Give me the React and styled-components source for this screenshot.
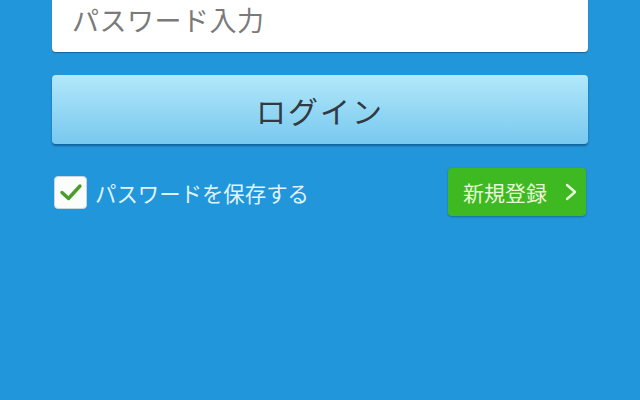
import styled, { createGlobalStyle } from "styled-components";

const GlobalStyle = createGlobalStyle`
  html, body {
    margin: 0;
    padding: 0;
    background: #2296da;
  }
  body {
    font-family: "Noto Sans CJK JP", "Noto Sans", sans-serif;
  }
`;

const Screen = styled.div`
  width: 640px;
  height: 400px;
  overflow: hidden;
  background: #2296da;
  box-sizing: border-box;
  padding: 0 52px;
`;

const Form = styled.div`
  display: flex;
  flex-direction: column;
`;

// the field's top edge is scrolled off the screen in the picture
const Field = styled.div`
  height: 52px;
  background: #fff;
  border-radius: 0 0 4px 4px;
  box-shadow: 0 1px 1px rgba(0, 40, 90, 0.45);
  display: flex;
  align-items: flex-start;
  padding: 6px 0 0 20px;
  box-sizing: border-box;
  color: #7a7a7a;
  font-size: 27px;
  line-height: 1;
  letter-spacing: 0.5px;
`;

const LoginButton = styled.div`
  margin-top: 23px;
  height: 69px;
  border-radius: 4px;
  background: linear-gradient(#b2e8fa, #78c8ef);
  box-shadow: 0 2px 2px rgba(0, 50, 100, 0.5);
  display: flex;
  align-items: center;
  justify-content: center;
  color: #2f3a42;
  font-size: 30px;
  letter-spacing: 2px;
`;

const Row = styled.div`
  display: flex;
  align-items: center;
  justify-content: space-between;
  margin-top: 24px;
`;

const Remember = styled.label`
  display: flex;
  align-items: center;
  gap: 8px;
  margin-left: 2px;
  color: #dff3fc;
  font-size: 21.4px;
`;

const Box = styled.span`
  width: 33px;
  height: 33px;
  box-sizing: border-box;
  border-radius: 4px;
  background: #fbfdfb;
  border: 1px solid #c9d6dd;
  display: flex;
  align-items: center;
  justify-content: center;
`;

const Register = styled.div`
  width: 138px;
  height: 48px;
  margin-right: 2px;
  border-radius: 4px;
  background: #3eb922;
  box-shadow: 0 1px 2px rgba(0, 60, 40, 0.4);
  display: flex;
  align-items: center;
  justify-content: space-between;
  padding: 0 8px 0 15px;
  box-sizing: border-box;
  color: #e6f8d8;
  font-size: 21px;
`;

export default function App() {
  return (
    <>
      <GlobalStyle />
      <Screen>
        <Form>
          <Field>パスワード入力</Field>
          <LoginButton>ログイン</LoginButton>
          <Row>
            <Remember>
              <Box>
                <svg width="24" height="20" viewBox="0 0 24 20">
                  <path
                    d="M3 10.5 L9.5 16.5 L21 4"
                    fill="none"
                    stroke="#4a9d2a"
                    strokeWidth="3.4"
                    strokeLinecap="round"
                    strokeLinejoin="round"
                  />
                </svg>
              </Box>
              パスワードを保存する
            </Remember>
            <Register>
              新規登録
              <svg width="14" height="20" viewBox="0 0 14 20">
                <path
                  d="M3 3 L11 10 L3 17"
                  fill="none"
                  stroke="#e6f8d8"
                  strokeWidth="2.4"
                  strokeLinecap="round"
                  strokeLinejoin="round"
                />
              </svg>
            </Register>
          </Row>
        </Form>
      </Screen>
    </>
  );
}
